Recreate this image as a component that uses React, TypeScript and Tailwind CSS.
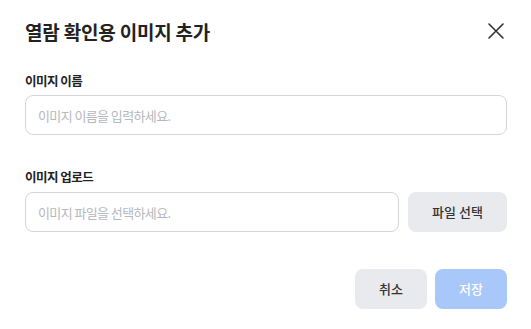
const font = {
  fontFamily: '"Noto Sans CJK KR", "Noto Sans", sans-serif',
};

export default function App() {
  return (
    <div
      className="w-[531px] h-[329px] bg-white pl-[25px] pr-[24px] pt-[17px] text-[#222]"
      style={font}
    >
      {/* Header */}
      <div className="flex items-center justify-between h-[28px]">
        <h2 className="text-[19px] font-bold leading-none tracking-[-0.2px]">
          열람 확인용 이미지 추가
        </h2>
        <button className="mr-[3px] text-[#333]">
          <svg width="16" height="16" viewBox="0 0 16 16" fill="none">
            <path
              d="M1 1L15 15M15 1L1 15"
              stroke="currentColor"
              strokeWidth="1.6"
              strokeLinecap="round"
            />
          </svg>
        </button>
      </div>

      {/* Image name */}
      <div className="mt-[27px]">
        <label className="block text-[12.5px] font-bold leading-[18px] tracking-[-0.5px] text-[#222]">
          이미지 이름
        </label>
        <input
          className="mt-[5px] w-full h-[40px] rounded-lg border border-[#d4d6da] px-3 text-[13px] tracking-[-0.6px] outline-none placeholder:text-[#b5b8bd]"
          placeholder="이미지 이름을 입력하세요."
        />
      </div>

      {/* Image upload */}
      <div className="mt-[33px]">
        <label className="block text-[12.5px] font-bold leading-[18px] tracking-[-0.5px] text-[#222]">
          이미지 업로드
        </label>
        <div className="mt-[6px] flex gap-[9px]">
          <input
            className="flex-1 h-[40px] rounded-lg border border-[#d4d6da] px-3 text-[13px] tracking-[-0.6px] outline-none placeholder:text-[#b5b8bd]"
            placeholder="이미지 파일을 선택하세요."
          />
          <button className="w-[99px] h-[40px] rounded-lg bg-[#e8eaed] text-[13px] font-medium text-[#333]">
            파일 선택
          </button>
        </div>
      </div>

      {/* Footer */}
      <div className="mt-[37px] flex justify-end gap-2">
        <button className="w-[72px] h-[40px] rounded-lg bg-[#e8eaed] text-[13px] font-medium text-[#333]">
          취소
        </button>
        <button className="w-[72px] h-[40px] rounded-lg bg-[#a9c8fa] text-[13px] font-medium text-white">
          저장
        </button>
      </div>
    </div>
  );
}
